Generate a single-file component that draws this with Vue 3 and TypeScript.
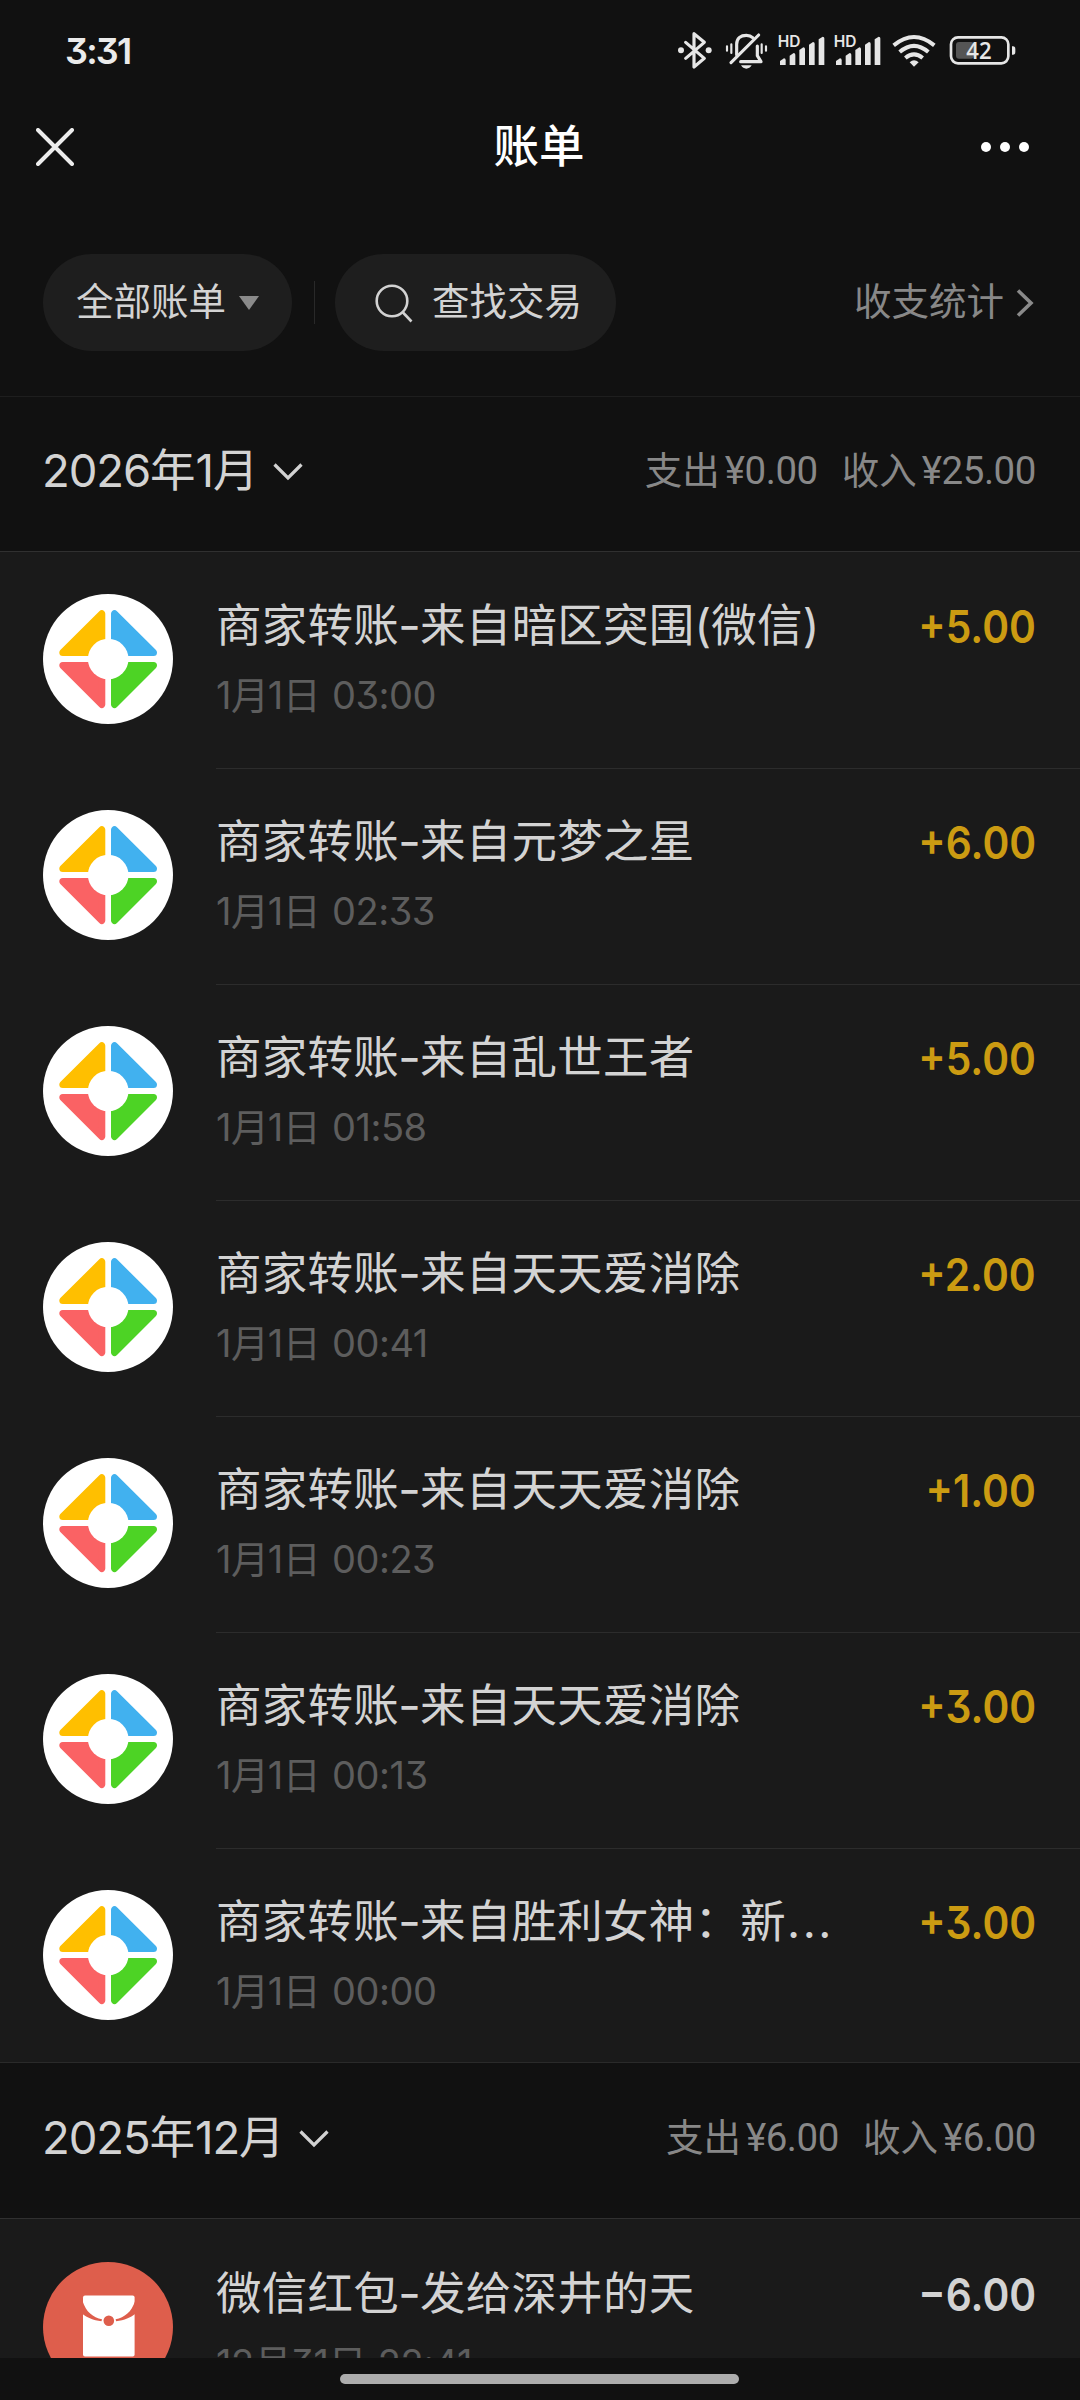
<script setup lang="ts">
interface Bill {
  icon: 'game' | 'packet'
  title: string
  time: string
  amount: string
}

interface Month {
  label: string
  spent: string
  income: string
  bills: Bill[]
}

interface Run {
  kind: 'num' | 'dash' | 'dots' | 'han'
  text: string
}

const game = (title: string, time: string, amount: string): Bill => ({ icon: 'game', title, time, amount })

const months: Month[] = [
  {
    label: '2026年1月',
    spent: '¥0.00',
    income: '¥25.00',
    bills: [
      game('商家转账-来自暗区突围(微信)', '1月1日 03:00', '+5.00'),
      game('商家转账-来自元梦之星', '1月1日 02:33', '+6.00'),
      game('商家转账-来自乱世王者', '1月1日 01:58', '+5.00'),
      game('商家转账-来自天天爱消除', '1月1日 00:41', '+2.00'),
      game('商家转账-来自天天爱消除', '1月1日 00:23', '+1.00'),
      game('商家转账-来自天天爱消除', '1月1日 00:13', '+3.00'),
      game('商家转账-来自胜利女神：新...', '1月1日 00:00', '+3.00'),
    ],
  },
  {
    label: '2025年12月',
    spent: '¥6.00',
    income: '¥6.00',
    bills: [{ icon: 'packet', title: '微信红包-发给深井的天', time: '12月31日 22:41', amount: '−6.00' }],
  },
]

const kindOf = (part: string): Run['kind'] => {
  if (part === '-') return 'dash'
  if (part === '...') return 'dots'
  return /^[0-9:]/.test(part) ? 'num' : 'han'
}

// Splits mixed text so digits, dashes and Han characters can be spaced separately.
const runs = (text: string): Run[] =>
  (text.match(/[0-9:]+|-|\.{3}|[^0-9:.-]+/g) ?? []).map((part) => ({ kind: kindOf(part), text: part }))

const signalBars = [
  { x: 6, y: 79 },
  { x: 35, y: 63 },
  { x: 64, y: 46 },
  { x: 93, y: 30 },
  { x: 122, y: 14 },
]
</script>

<template>
  <div class="screen">
    <div class="status">
      <span class="clock">3:31</span>
      <svg class="status-icons" viewBox="53 60 1014 126" width="338" height="42" fill="none" stroke="#e6e6e6" stroke-linecap="round" stroke-linejoin="round">
        <g stroke-width="9.500">
          <path d="M76 97 L132 145 L101 171 V71 L132 97 L76 145" />
          <circle cx="62" cy="121" r="9" fill="#e6e6e6" stroke="none" />
          <circle cx="145" cy="121" r="9" fill="#e6e6e6" stroke="none" />
        </g>
        <g stroke-width="9.500">
          <path d="M212 158 L295 75" />
          <path d="M229 134 V103 C229 84 242 76 258 76 C266 76 273 79 277 83" />
          <path d="M241 155 H302 L291 137 V108" />
          <path d="M242 166 H274 Q268 176 258 176 Q248 176 242 166Z" fill="#e6e6e6" stroke="none" />
          <path d="M200 109 V122 M213 103 V129 M304 103 V129 M317 109 V122" stroke-width="6.500" />
        </g>
        <g v-for="left in [353, 521]" :key="left" :transform="`translate(${left} 66)`" stroke="none" fill="#e6e6e6">
          <text x="-1" y="44" class="hd" textLength="68" lengthAdjust="spacingAndGlyphs">HD</text>
          <path v-for="bar in signalBars" :key="bar.x" :d="`M${bar.x} ${bar.y + 8} L${bar.x + 12} ${bar.y} Q${bar.x + 17} ${bar.y} ${bar.x + 17} ${bar.y + 5} V99 H${bar.x}Z`" />
        </g>
        <g stroke-width="12" stroke-linecap="butt">
          <path d="M700 106 Q761 56 822 106" />
          <path d="M718 126 Q761 89 804 126" />
          <path d="M735 144 Q761 122 787 144" />
          <path d="M748 157 Q761 145 775 157 L761 170Z" fill="#e6e6e6" stroke="none" />
        </g>
        <rect x="872" y="82" width="172" height="78" rx="21" stroke-width="8" />
        <rect x="887" y="96" width="54" height="50" rx="9" fill="#555" stroke="none" />
        <path d="M1055 109 H1058 Q1065 109 1065 117 V126 Q1065 134 1058 134 H1055Z" fill="#e6e6e6" stroke="none" />
        <text x="918" y="146" class="charge" fill="#e6e6e6" stroke="none" textLength="76" lengthAdjust="spacingAndGlyphs">42</text>
      </svg>
    </div>

    <header class="nav">
      <svg class="close" viewBox="0 0 38 38" width="38" height="38">
        <path d="M2 2 L36 36 M36 2 L2 36" stroke="#ededed" stroke-width="4" stroke-linecap="round" />
      </svg>
      <h1>账单</h1>
      <svg class="more" viewBox="0 0 50 12" width="50" height="12" fill="#fff">
        <circle cx="6" cy="6" r="5" /><circle cx="25" cy="6" r="5" /><circle cx="44" cy="6" r="5" />
      </svg>
    </header>

    <div class="filters">
      <div class="pill all">
        <span>全部账单</span>
        <svg viewBox="0 0 20 14" width="20" height="14"><path d="M0 0H20L10 14Z" fill="#8a8a8a" /></svg>
      </div>
      <i class="bar"></i>
      <div class="pill find">
        <svg viewBox="0 0 40 40" width="40" height="40" fill="none" stroke="#d2d2d2" stroke-width="2.6">
          <circle cx="18" cy="18" r="15.3" /><path d="M28.500 29 L37.500 38.500" />
        </svg>
        <span>查找交易</span>
      </div>
      <div class="stats">
        <span>收支统计</span>
        <svg viewBox="0 0 18 30" width="18" height="30"><path d="M2 2.500 L15 15 L2 27.500" fill="none" stroke="#8a8a8a" stroke-width="3.600" /></svg>
      </div>
    </div>

    <section v-for="month in months" :key="month.label" class="month">
      <div class="month-head">
        <h2><span v-for="(run, i) in runs(month.label)" :key="i" :class="run.kind">{{ run.text }}</span></h2>
        <svg class="down" viewBox="0 0 30 18" width="30" height="18"><path d="M1.500 1.500 L15 15 L28.500 1.500" fill="none" stroke="#d2d2d2" stroke-width="3.200" /></svg>
        <div class="totals">
          <span>支出<b>{{ month.spent }}</b></span>
          <span>收入<b>{{ month.income }}</b></span>
        </div>
      </div>
      <article v-for="(bill, n) in month.bills" :key="n" class="bill">
        <svg v-if="bill.icon === 'game'" class="avatar" viewBox="0 0 130 130" width="130" height="130">
          <circle cx="65" cy="65" r="65" fill="#fff" />
          <g stroke-width="7" stroke-linejoin="round">
            <path d="M58.800 19.800V58.500H19.800Z" fill="#ffbf00" stroke="#ffbf00" />
            <path d="M71.500 19.800V58.500H110.500Z" fill="#41b1ef" stroke="#41b1ef" />
            <path d="M58.800 110.500V71.500H19.800Z" fill="#fa6264" stroke="#fa6264" />
            <path d="M71.500 110.500V71.500H110.500Z" fill="#4dd325" stroke="#4dd325" />
          </g>
          <circle cx="65.200" cy="65" r="20.300" fill="#fff" />
        </svg>
        <svg v-else class="avatar" viewBox="0 0 130 130" width="130" height="130">
          <circle cx="65" cy="65" r="65" fill="#de5e4c" />
          <rect x="40" y="33.500" width="51.600" height="61" rx="2" fill="#fff" />
          <path d="M39.500 39 C43 50 50 55.500 59 57.300 L58.500 59.300 C50 58.300 44 55.500 39.500 52Z" fill="#de5e4c" />
          <path d="M92.100 39 C88.600 50 81.600 55.500 72.600 57.300 L73.100 59.300 C81.600 58.300 87.600 55.500 92.100 52Z" fill="#de5e4c" />
          <circle cx="65.800" cy="58.700" r="5.300" fill="#de5e4c" />
        </svg>
        <div class="body">
          <div class="line">
            <span class="title"><span v-for="(run, i) in runs(bill.title)" :key="i" :class="run.kind">{{ run.text }}</span></span>
            <span class="amount" :class="{ gain: bill.amount.startsWith('+') }">{{ bill.amount }}</span>
          </div>
          <div class="time"><span v-for="(run, i) in runs(bill.time)" :key="i" :class="run.kind">{{ run.text }}</span></div>
        </div>
      </article>
    </section>

    <footer class="home"><i></i></footer>
  </div>
</template>

<style>
body {
  background: #111;
}
</style>

<style scoped>
.screen {
  position: relative;
  display: flex;
  flex-direction: column;
  width: 1080px;
  height: 2400px;
  overflow: hidden;
  background: #111;
  color: #d3d3d3;
  font-family: Inter, "Noto Sans CJK SC", sans-serif;
  font-feature-settings: "cv09";
  white-space: pre;
}
.screen > * {
  flex: none;
}
svg {
  display: block;
  flex: none;
}
.status {
  display: flex;
  align-items: center;
  justify-content: space-between;
  box-sizing: border-box;
  height: 102px;
  padding: 0 64.500px 0 65px;
}
.clock {
  color: #ebebeb;
  font-size: 36px;
  font-weight: 600;
  line-height: 44px;
  letter-spacing: -1.800px;
}
.hd {
  font: 600 46px Inter, sans-serif;
}
.charge {
  font: 600 68px "Open Sans", sans-serif;
}
.nav {
  display: flex;
  align-items: center;
  justify-content: space-between;
  box-sizing: border-box;
  height: 90px;
  padding: 0 50px 1px 36px;
}
.nav h1 {
  margin: 0 0 0 24px;
  color: #fff;
  font-size: 45.500px;
  font-weight: 500;
  line-height: 60px;
}
.filters {
  display: flex;
  align-items: center;
  height: 97px;
  padding: 62px 46px 45px 43px;
  font-size: 37.500px;
  line-height: 56px;
}
.filters span {
  margin-top: -2px;
}
.pill {
  display: flex;
  align-items: center;
  box-sizing: border-box;
  height: 97px;
  border-radius: 49px;
  background: #1e1e1e;
}
.all {
  width: 249px;
  gap: 13px;
  padding-left: 33px;
}
.bar {
  width: 1px;
  height: 43px;
  margin: 0 20px 0 22px;
  background: #292929;
}
.find {
  width: 281px;
  gap: 18px;
  padding-left: 39px;
}
.stats {
  display: flex;
  align-items: center;
  gap: 12px;
  margin-left: auto;
  color: #888;
}
.month-head {
  display: flex;
  align-items: center;
  box-sizing: border-box;
  height: 156px;
  padding: 0 44px 7px 42px;
  border-top: 1px solid #1e1e1e;
  border-bottom: 1px solid #303030;
}
.month + .month .month-head {
  height: 157px;
  padding-bottom: 5px;
  border-top-color: #2a2a2a;
}
h2 {
  margin: 0;
  font-size: 45.500px;
  font-weight: 400;
  line-height: 60px;
}
h2 .num {
  letter-spacing: -1.100px;
}
.down {
  margin: 2px 0 0 14.500px;
}
.totals {
  display: flex;
  gap: 24px;
  margin-left: auto;
  color: #888;
  font-size: 37.500px;
  line-height: 56px;
}
.totals b {
  margin-left: 5px;
  font-family: Roboto, sans-serif;
  font-size: 38.500px;
  font-weight: 400;
  letter-spacing: -0.450px;
}
.bill {
  display: flex;
  box-sizing: border-box;
  height: 216px;
  padding-left: 43px;
  background: #1a1a1a;
}
.bill:last-child {
  height: 214px;
}
.avatar {
  margin-top: 42px;
}
.body {
  flex: 1;
  margin-left: 43px;
  padding: 43px 44px 0 0;
  border-top: 1px solid #2c2c2c;
}
.bill:nth-child(2) .body {
  border-top-color: transparent;
}
.month + .month .bill {
  padding-top: 1px;
}
.line {
  display: flex;
  align-items: center;
  justify-content: space-between;
  height: 60px;
}
.title {
  font-size: 45.500px;
  line-height: 60px;
  letter-spacing: 0.250px;
}
.dots {
  margin-left: 1px;
  letter-spacing: 2.500px;
}
.dash {
  display: inline-block;
  width: 21px;
  text-align: center;
  transform: scaleX(1.1);
}
.amount {
  margin-top: 2px;
  font-size: 45px;
  font-weight: 600;
  line-height: 60px;
  transform: scaleX(0.905);
  transform-origin: right;
}
.gain {
  color: #cb9b12;
}
.time {
  margin-top: 11px;
  color: #5d5d5d;
  font-size: 38px;
  line-height: 56px;
}
.time .num {
  letter-spacing: -0.500px;
}
.time .han {
  letter-spacing: -1.200px;
  word-spacing: 3px;
}
.home {
  position: absolute;
  right: 0;
  bottom: 0;
  left: 0;
  display: flex;
  justify-content: center;
  box-sizing: border-box;
  height: 42px;
  padding: 16px 1px 0 0;
  background: #111;
}
.home i {
  width: 399px;
  height: 10px;
  border-radius: 5px;
  background: #adadad;
}
</style>
